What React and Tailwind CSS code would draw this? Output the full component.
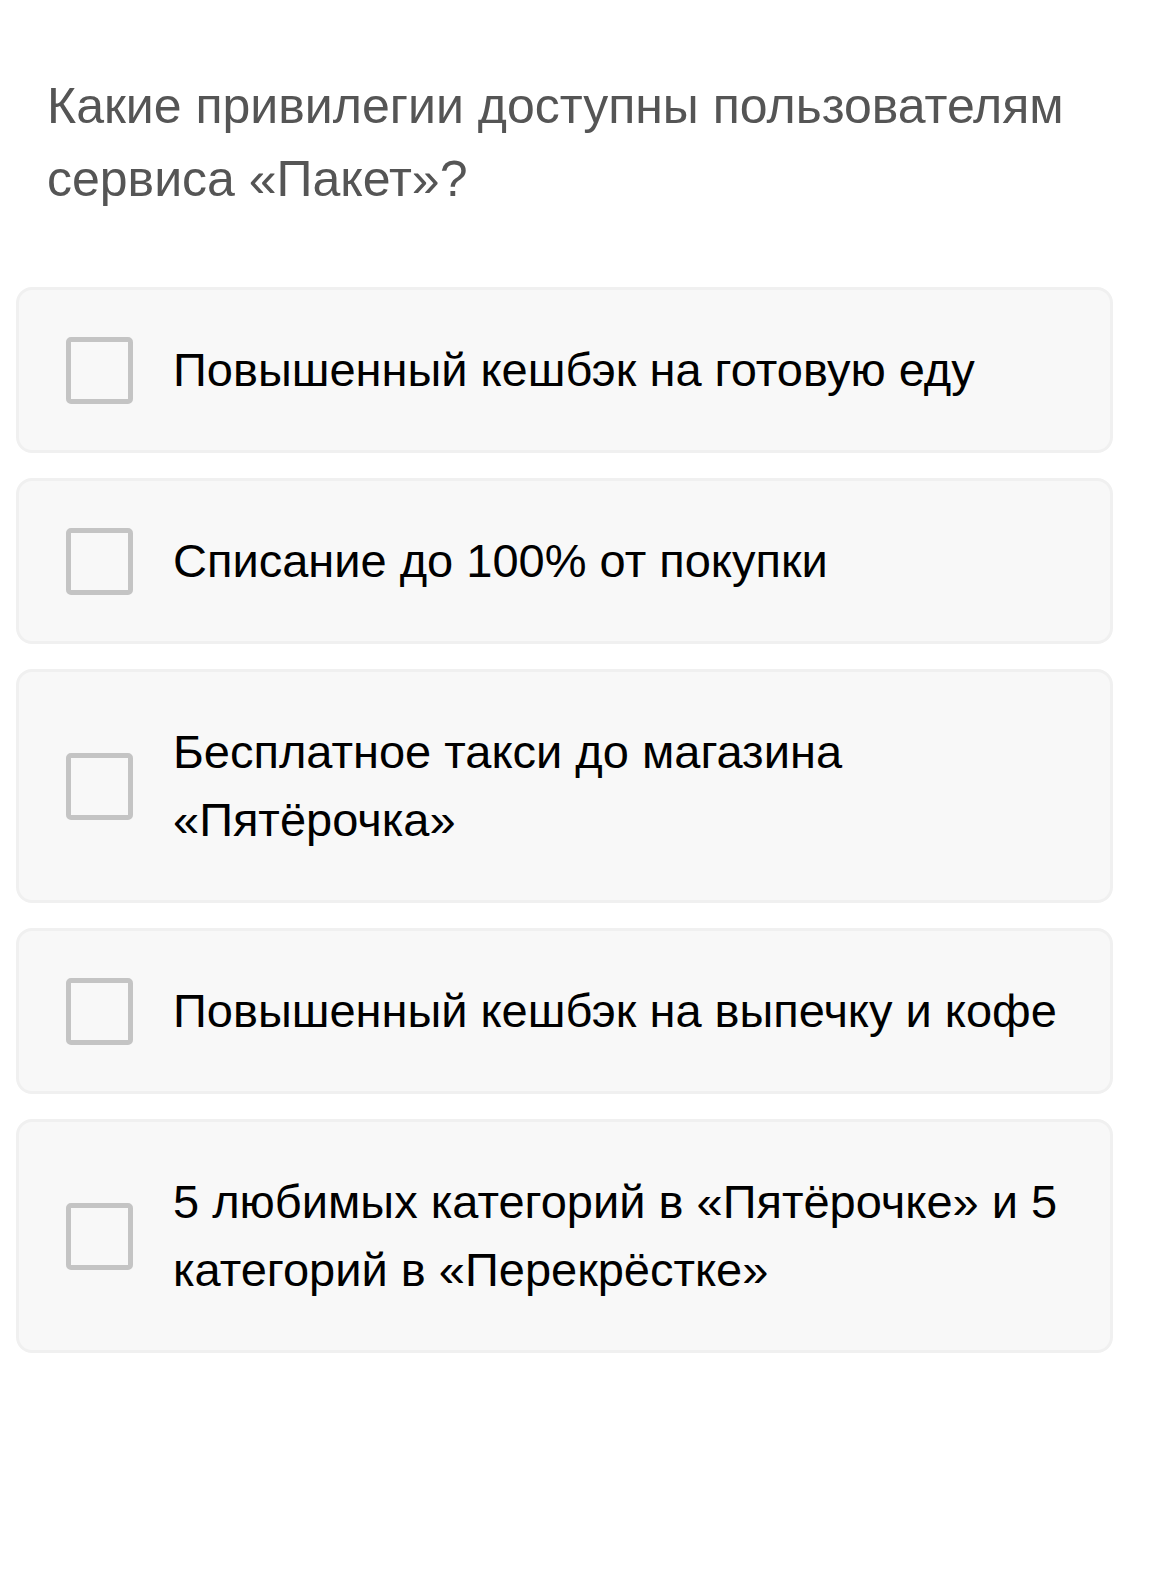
import React, { useState } from "react";

const options = [
  "Повышенный кешбэк на готовую еду",
  "Списание до 100% от покупки",
  "Бесплатное такси до магазина «Пятёрочка»",
  "Повышенный кешбэк на выпечку и кофе",
  "5 любимых категорий в «Пятёрочке» и 5 категорий в «Перекрёстке»",
];

const App = () => {
  const [checked, setChecked] = useState({});

  const toggle = (i) => {
    setChecked((prev) => ({ ...prev, [i]: !prev[i] }));
  };

  return (
    <div className="min-h-[1580px] bg-white pt-[70px] pl-4 pr-[45px] font-['Liberation_Sans',Arial,sans-serif]">
      <h1 className="pl-[31px] text-[50px] leading-[73px] text-[#555555]">
        Какие привилегии доступны пользователям сервиса «Пакет»?
      </h1>

      <div className="mt-[71px] flex flex-col gap-[25px]">
        {options.map((text, i) => (
          <div
            key={i}
            className="flex items-center rounded-2xl border-[3px] border-[#f0f0f0] bg-[#f8f8f8] py-[46px] pl-[47px] pr-6 cursor-pointer"
            onClick={() => toggle(i)}
          >
            <span className="h-[67px] w-[67px] shrink-0 rounded-[5px] border-[5px] border-[#c4c4c4]" />
            <span className="ml-10 text-[47px] leading-[68px] text-black">
              {text}
            </span>
          </div>
        ))}
      </div>
    </div>
  );
};

export default App;
